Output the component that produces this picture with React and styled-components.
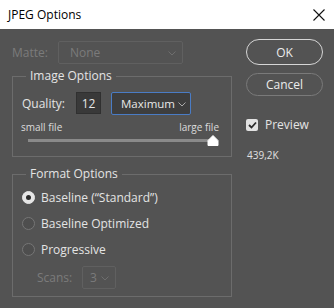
import React from "react";
import styled, { createGlobalStyle } from "styled-components";

const Global = createGlobalStyle`
  html, body { margin: 0; padding: 0; background: #535353; }
  body { font-family: "Open Sans", "Noto Sans", sans-serif; }
`;

const Window = styled.div`
  width: 334px;
  height: 308px;
  background: #535353;
  overflow: hidden;
  font-family: "Open Sans", "Noto Sans", sans-serif;
  font-size: 11.5px;
  color: #e4e4e4;
`;

const TitleBar = styled.div`
  height: 29px;
  background: #ffffff;
  display: flex;
  align-items: center;
  justify-content: space-between;
  padding: 0 9px 0 8px;
  color: #000;
  font-size: 12px;
`;

const Title = styled.span`
  margin-top: -1px;
`;

const Content = styled.div`
  display: flex;
  padding: 10px 0 0 12px;
`;

const LeftCol = styled.div`
  width: 220px;
  display: flex;
  flex-direction: column;
`;

const RightCol = styled.div`
  margin-left: 14px;
  width: 77px;
  display: flex;
  flex-direction: column;
`;

const Row = styled.div`
  display: flex;
  align-items: center;
  gap: ${(p) => p.$gap || 0}px;
  padding-left: ${(p) => p.$pl || 0}px;
  margin-top: ${(p) => p.$mt || 0}px;
  height: ${(p) => p.$h || 22}px;
`;

const Label = styled.span`
  color: ${(p) => (p.$disabled ? "#7b7b7b" : "#e4e4e4")};
  width: ${(p) => (p.$w ? p.$w + "px" : "auto")};
  font-size: ${(p) => p.$fs || 12}px;
  white-space: nowrap;
`;

const Select = styled.div`
  box-sizing: border-box;
  width: ${(p) => p.$w}px;
  height: 23px;
  margin-left: ${(p) => p.$ml || 0}px;
  border: 1px solid ${(p) => (p.$focus ? "#4a7cc5" : p.$disabled ? "#606060" : "#2f2f2f")};
  border-radius: 2px;
  background: ${(p) => (p.$disabled ? "#535353" : "#3e3e3e")};
  color: ${(p) => (p.$disabled ? "#7b7b7b" : "#e8e8e8")};
  display: flex;
  align-items: center;
  justify-content: space-between;
  padding: 0 ${(p) => p.$pr || 6}px 0 ${(p) => p.$pl || 9}px;
  font-size: ${(p) => p.$fs || 11.5}px;
  white-space: nowrap;
`;

const Chevron = ({ color = "#9a9a9a" }) => (
  <svg width="8" height="5" viewBox="0 0 8 5" style={{ marginTop: 2, flex: "none" }}>
    <path d="M0.5 0.5 L4 4 L7.5 0.5" fill="none" stroke={color} strokeWidth="1" />
  </svg>
);

const NumBox = styled.div`
  box-sizing: border-box;
  width: 25px;
  height: 22px;
  background: #393939;
  border: 1px solid #303030;
  display: flex;
  align-items: center;
  justify-content: center;
  color: #e8e8e8;
  font-size: 12px;
`;

const Group = styled.fieldset`
  margin: ${(p) => p.$mt || 0}px 0 0 0;
  padding: 0;
  border: 1px solid #6c6c6c;
  min-width: 0;
  height: ${(p) => p.$h}px;
  box-sizing: border-box;
`;

const Legend = styled.legend`
  margin-left: 13px;
  padding: 0 4px;
  line-height: 16px;
  font-size: 12px;
  color: #e4e4e4;
`;

const GroupBody = styled.div`
  padding: ${(p) => p.$pt || 0}px 9px 0 9px;
  display: flex;
  flex-direction: column;
`;

const SliderLabels = styled.div`
  display: flex;
  justify-content: space-between;
  font-size: 10px;
  color: #dcdcdc;
  margin-top: 7px;
  padding-right: 3px;
  margin-left: -1px;
  line-height: 12px;
`;

const SliderTrack = styled.div`
  position: relative;
  height: 3px;
  background: #8a8a8a;
  margin: 6px 9px 0 6px;
`;

const Thumb = styled.svg`
  position: absolute;
  right: -6px;
  top: -4px;
`;

const RadioRow = styled.div`
  display: flex;
  align-items: center;
  height: 26px;
  gap: 6px;
  padding-left: 0px;
  margin-top: ${(p) => p.$mt || 0}px;
`;

const RadioCircle = styled.span`
  box-sizing: border-box;
  width: 13px;
  height: 13px;
  border-radius: 50%;
  border: 1px solid ${(p) => (p.$on ? "#e6e6e6" : "#767676")};
  background: ${(p) => (p.$on ? "#e6e6e6" : "#4e4e4e")};
  display: flex;
  align-items: center;
  justify-content: center;
  &::after {
    content: "";
    display: ${(p) => (p.$on ? "block" : "none")};
    width: 5px;
    height: 5px;
    border-radius: 50%;
    background: #2b2b2b;
  }
`;

const Button = styled.div`
  box-sizing: border-box;
  width: 77px;
  height: ${(p) => p.$h || 26}px;
  border-radius: 13px;
  border: ${(p) => (p.$primary ? "1.5px solid #d6d6d6" : "1px solid #7a7a7a")};
  display: flex;
  align-items: center;
  justify-content: center;
  color: #ececec;
  font-size: 12px;
  margin-top: ${(p) => p.$mt || 0}px;
`;

const CheckRow = styled.div`
  display: flex;
  align-items: center;
  gap: 7px;
  margin-top: 22px;
  height: 13px;
  font-size: 12px;
`;

const CheckBox = styled.span`
  box-sizing: border-box;
  width: 12px;
  height: 12px;
  border-radius: 2px;
  background: #e2e2e2;
  display: flex;
  align-items: center;
  justify-content: center;
`;

const Size = styled.div`
  font-size: 10px;
  color: #e0e0e0;
  margin-top: 17px;
  margin-left: 1px;
`;

export default function App() {
  return (
    <Window>
      <Global />
      <TitleBar>
        <Title>JPEG Options</Title>
        <svg width="12" height="12" viewBox="0 0 12 12">
          <path d="M0.5 0.5 L11.5 11.5 M11.5 0.5 L0.5 11.5" stroke="#111" strokeWidth="1.1" fill="none" />
        </svg>
      </TitleBar>
      <Content>
        <LeftCol>
          <Row $gap={7} $h={24} $mt={1}>
            <Label $disabled $w={39}>Matte:</Label>
            <Select $w={125} $disabled $pl={11} $fs={12}>
              None
              <Chevron color="#6e6e6e" />
            </Select>
          </Row>
          <Group $mt={4} $h={89}>
            <Legend>Image Options</Legend>
            <GroupBody $pt={8}>
              <Row $gap={0} $h={22}>
                <Label $w={54}>Quality:</Label>
                <NumBox>12</NumBox>
                <Select $w={80} $focus $pl={9} $pr={4} $fs={11.5} $ml={10}>
                  Maximum
                  <Chevron color="#aaaaaa" />
                </Select>
              </Row>
              <SliderLabels>
                <span>small file</span>
                <span>large file</span>
              </SliderLabels>
              <SliderTrack>
                <Thumb width="12" height="11" viewBox="0 0 12 11">
                  <path d="M6 0.5 L11 5.5 L11 10.5 L1 10.5 L1 5.5 Z" fill="#ffffff" stroke="#ffffff" strokeLinejoin="round" />
                </Thumb>
              </SliderTrack>
            </GroupBody>
          </Group>
          <Group $mt={9} $h={131}>
            <Legend>Format Options</Legend>
            <GroupBody $pt={0}>
              <RadioRow $mt={2}>
                <RadioCircle $on />
                <Label>Baseline (“Standard”)</Label>
              </RadioRow>
              <RadioRow>
                <RadioCircle />
                <Label>Baseline Optimized</Label>
              </RadioRow>
              <RadioRow>
                <RadioCircle />
                <Label>Progressive</Label>
              </RadioRow>
              <Row $gap={7} $pl={15} $mt={4} $h={23}>
                <Label $disabled $w={38}>Scans:</Label>
                <Select $w={34} $disabled $pl={7} $fs={12}>
                  3
                  <Chevron color="#6e6e6e" />
                </Select>
              </Row>
            </GroupBody>
          </Group>
        </LeftCol>
        <RightCol>
          <Button $primary>OK</Button>
          <Button $mt={8} $h={23}>Cancel</Button>
          <CheckRow>
            <CheckBox>
              <svg width="9" height="8" viewBox="0 0 9 8">
                <path d="M1 4 L3.5 6.5 L8 1.5" fill="none" stroke="#2a2a2a" strokeWidth="1.8" />
              </svg>
            </CheckBox>
            Preview
          </CheckRow>
          <Size>439,2K</Size>
        </RightCol>
      </Content>
    </Window>
  );
}
